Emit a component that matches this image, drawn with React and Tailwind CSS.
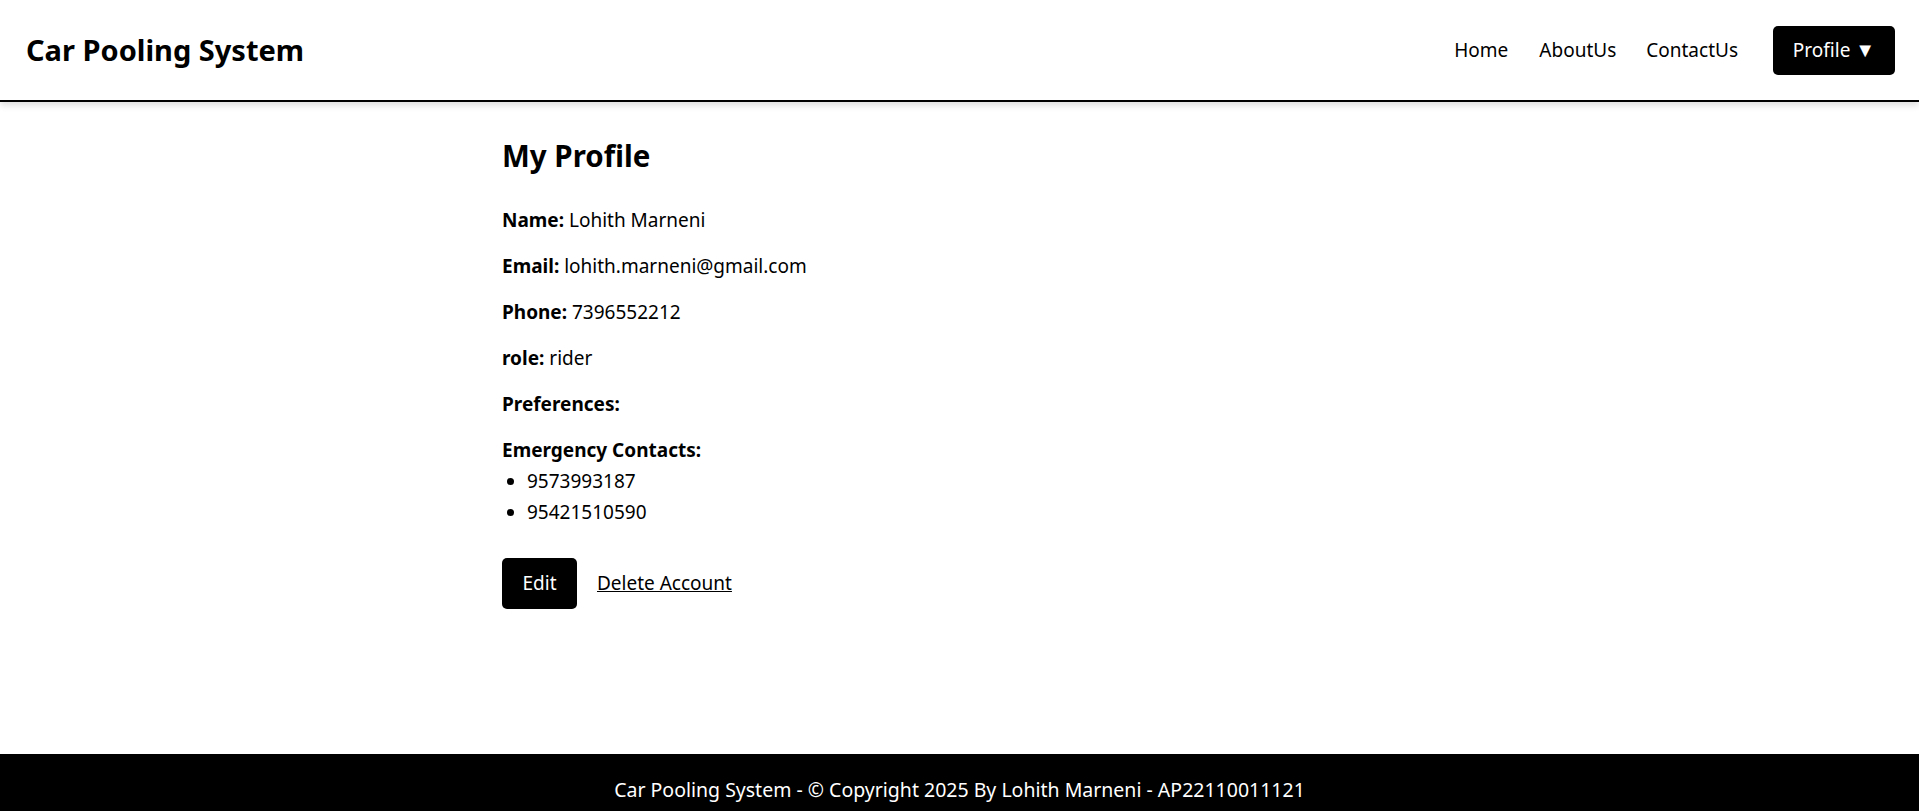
export default function App() {
  const font = { fontFamily: '"Noto Sans", "Open Sans", sans-serif' }
  return (
    <div className="min-h-screen flex flex-col bg-white text-black overflow-hidden h-[811px]" style={font}>
      {/* Navbar */}
      <header className="h-[102px] shrink-0 flex items-center justify-between pl-[26px] pr-[24px] border-b-2 border-black shadow-[0_4px_6px_rgba(0,0,0,0.12)]">
        <h1 className="text-[29px] font-bold">Car Pooling System</h1>
        <nav className="flex items-center text-[19px]">
          <a className="mr-[31px]">Home</a>
          <a className="mr-[30px]">AboutUs</a>
          <a className="mr-[35px]">ContactUs</a>
          <button className="bg-black text-white rounded-[5px] w-[122px] h-[49px] flex items-center justify-center gap-[5px]">
            Profile <span className="text-[20px] leading-none">▼</span>
          </button>
        </nav>
      </header>

      {/* Profile */}
      <main className="flex-1 w-[915px] mx-auto pt-[36px]">
        <h2 className="text-[29.5px] font-bold leading-[36px] mb-[34px]">My Profile</h2>
        <div className="text-[19px] leading-[24px] flex flex-col gap-[22px]">
          <p><b>Name:</b> Lohith Marneni</p>
          <p><b>Email:</b> lohith.marneni@gmail.com</p>
          <p><b>Phone:</b> 7396552212</p>
          <p><b>role:</b> rider</p>
          <p><b>Preferences:</b></p>
          <div>
            <p><b>Emergency Contacts:</b></p>
            <ul className="list-disc pl-[25px] mt-[4px] leading-[31px]">
              <li>9573993187</li>
              <li>95421510590</li>
            </ul>
          </div>
        </div>
        <div className="flex items-center gap-[20px] mt-[30px] text-[19px]">
          <button className="bg-black text-white rounded-[5px] w-[75px] h-[51px]">Edit</button>
          <a className="underline">Delete Account</a>
        </div>
      </main>

      {/* Footer */}
      <footer className="bg-black text-white text-[19.5px] text-center h-[57px] pt-[24px] shrink-0 leading-[24px]">
        Car Pooling System - © Copyright 2025 By Lohith Marneni - AP22110011121
      </footer>
    </div>
  )
}
